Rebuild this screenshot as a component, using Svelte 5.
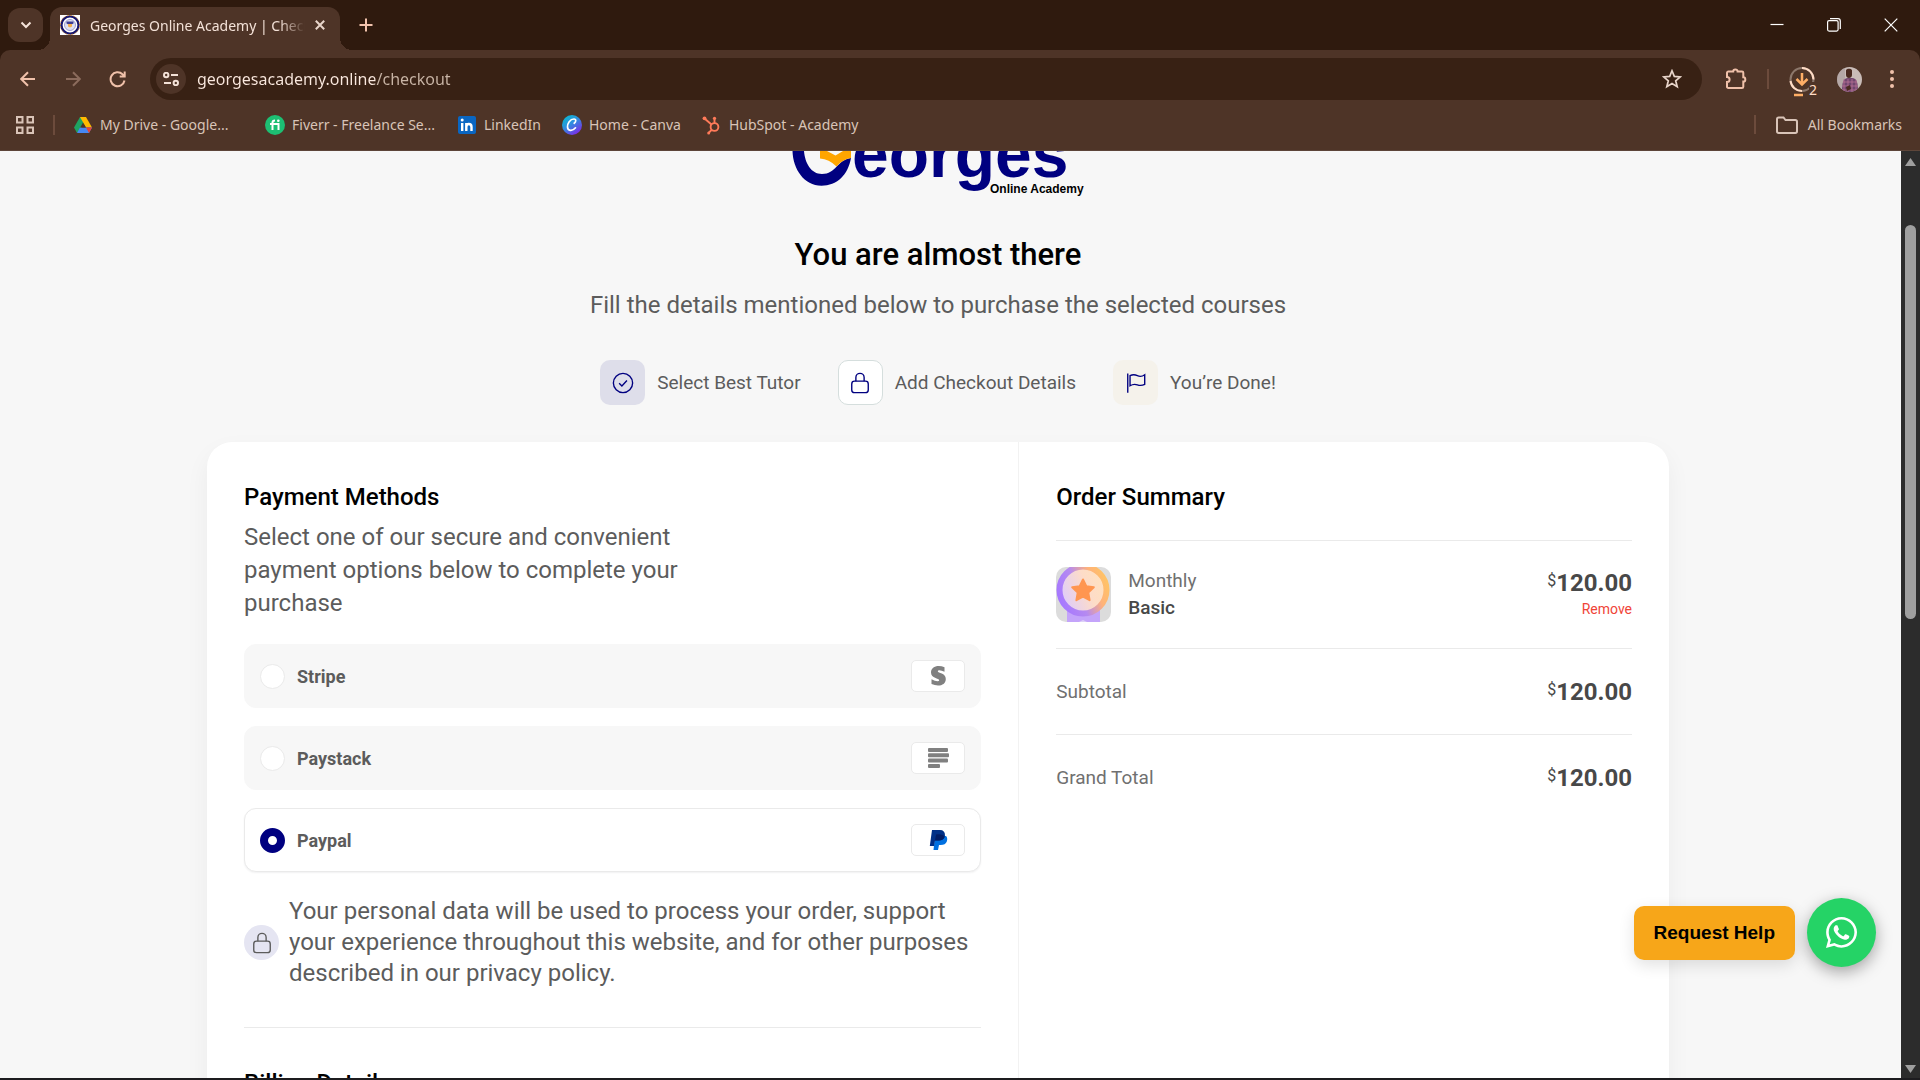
<script>
  const bookmarks = [
    { id: "drive", label: "My Drive - Google...", long: true },
    { id: "fiverr", label: "Fiverr - Freelance Se...", long: true },
    { id: "linkedin", label: "LinkedIn" },
    { id: "canva", label: "Home - Canva" },
    { id: "hubspot", label: "HubSpot - Academy" },
  ];

  const steps = [
    { id: "tutor", label: "Select Best Tutor" },
    { id: "checkout", label: "Add Checkout Details" },
    { id: "done", label: "You’re Done!" },
  ];

  const methods = [
    { id: "stripe", label: "Stripe" },
    { id: "paystack", label: "Paystack" },
    { id: "paypal", label: "Paypal" },
  ];

  const totals = [
    { label: "Subtotal", amount: "120.00" },
    { label: "Grand Total", amount: "120.00" },
  ];

  let selected = $state("paypal");
  let url = $state("georgesacademy.online/checkout");
</script>

{#snippet price(amount)}
  <span class="price"><sup>$</sup>{amount}</span>
{/snippet}

{#snippet lock()}
  <svg class="lock" viewBox="0 0 24 24">
    <rect x="3" y="10" width="18" height="12.5" rx="3" />
    <path d="M7.5 10V6a4.5 4.500 0 0 1 9 0v4" />
  </svg>
{/snippet}

<div class="window">
  <header class="chrome">
    <div class="tabstrip">
      <button class="tab-search" aria-label="Search tabs">
        <svg width="12" height="8" viewBox="0 0 12 8"><path d="M1.500 1.500 6 6l4.500-4.500" /></svg>
      </button>
      <div class="tab">
        <svg class="favicon" viewBox="0 0 20 20">
          <path fill="#fff" d="M0 0h20v20H0z" />
          <circle cx="10" cy="10" r="8.600" fill="#fff" stroke="#14146e" stroke-width="2.400" />
          <circle cx="10" cy="10" r="9.600" fill="none" stroke="#e0912a" stroke-width=".7" stroke-dasharray="2 1" />
          <circle cx="10" cy="10" r="5.500" fill="#dfe1f3" stroke="#8a8ac4" stroke-width=".8" />
          <path fill="#3c3c92" d="M6.500 6.500h7v2l-2 1h-3l-2-1z" />
          <path fill="#f2b04f" d="M8 9h4v2.500l-2 1-2-1z" />
        </svg>
        <span class="tab-title">Georges Online Academy | Checkout</span>
        <button class="plain" aria-label="Close tab">
          <svg width="10" height="10" viewBox="0 0 10 10"><path d="m.8.8 8.400 8.400M9.200.8.8 9.200" /></svg>
        </button>
      </div>
      <button class="plain new-tab" aria-label="New tab">
        <svg width="14" height="14" viewBox="0 0 14 14"><path d="M7 .5v13M.5 7h13" /></svg>
      </button>
      <div class="controls">
        <button class="plain" aria-label="Minimize">
          <svg width="14" height="14" viewBox="0 0 14 14"><path d="M.5 6.500h13" /></svg>
        </button>
        <button class="plain" aria-label="Restore">
          <svg width="14" height="14" viewBox="0 0 14 14">
            <rect x=".6" y="2.600" width="10.500" height="10.500" rx="1.500" />
            <path d="M3 .7h8a2.300 2.300 0 0 1 2.300 2.300v8" />
          </svg>
        </button>
        <button class="plain" aria-label="Close">
          <svg width="14" height="14" viewBox="0 0 14 14"><path d="m.7.7 12.600 12.600M13.300.7.7 13.300" /></svg>
        </button>
      </div>
    </div>

    <div class="toolbar">
      <button class="plain nav" aria-label="Back">
        <svg width="16" height="16" viewBox="0 0 16 16"><path d="M15 8H1.500M8 1.200 1.200 8 8 14.800" /></svg>
      </button>
      <button class="plain nav off" aria-label="Forward">
        <svg width="16" height="16" viewBox="0 0 16 16"><path d="M1 8h13.500M8 1.200 14.800 8 8 14.800" /></svg>
      </button>
      <button class="plain nav" aria-label="Reload">
        <svg width="18" height="18" viewBox="0 0 18 18">
          <path d="M15.500 10.500A7 7 0 1 1 13.500 4.200l2 1.800M15.700 1.500V6.500h-5" />
        </svg>
      </button>
      <div class="address">
        <button class="site-info" aria-label="View site information">
          <svg width="16" height="14" viewBox="0 0 16 14">
            <circle cx="3.200" cy="3" r="2.200" /><path d="M8 3h7" />
            <circle cx="12.800" cy="11" r="2.200" /><path d="M1 11h7" />
          </svg>
        </button>
        <input class="url" type="text" aria-label="Address bar" bind:value={url} />
        <button class="plain" aria-label="Bookmark this page">
          <svg width="20" height="20" viewBox="0 0 20 20">
            <path d="m10 1.800 2.300 5.600 6 .5-4.600 3.900 1.500 5.900L10 14.500l-5.200 3.200 1.500-5.900L1.700 7.900l6-.5z" />
          </svg>
        </button>
      </div>
      <div class="actions">
        <button class="plain" aria-label="Extensions">
          <svg width="22" height="22" viewBox="0 0 22 22">
            <path d="M3.300 3.500h4.900a2.200 2 0 0 1 4.400 0H17a1.300 1.300 0 0 1 1.300 1.300v4.400a2 2.200 0 0 1 0 4.400v5.100a1.300 1.300 0 0 1-1.300 1.300H3.300A1.300 1.300 0 0 1 2 18.700v-4.600a2.600 2.600 0 0 0 0-5.200V4.800a1.300 1.300 0 0 1 1.300-1.300z" />
          </svg>
        </button>
        <span class="rule"></span>
        <button class="plain downloads" aria-label="Downloads">
          <svg width="28" height="37" viewBox="0 -5 28 37">
            <circle cx="13" cy="13.500" r="11.500" stroke="#8d786c" />
            <path stroke="#ffdcc6" d="M13 2a11.500 11.500 0 0 1 11.500 11.500M1.500 15A11.500 11.500 0 0 0 13 25" />
            <path stroke="#ffae66" stroke-width="2.500" d="M13 7v11M7.500 13l5.500 5.500 5.500-5.500M5 29h9" />
          </svg>
          <span class="badge">2</span>
        </button>
        <button class="plain" aria-label="Profile">
          <svg class="avatar" width="25" height="25" viewBox="0 0 25 25">
            <path fill="#c9bcb8" d="M0 0h25v25H0z" />
            <path fill="#8f8386" d="M0 0h8v25H0z" opacity=".35" />
            <path fill="#71466f" d="M5 25c0-9 1-14 6-14h4c5 0 6 5 6 14z" />
            <path stroke="#b97196" stroke-width=".8" d="M7 12v13M11 12v13M15 12v13M19 13v12M6 15h14M5 19h16M5 23h16" />
            <path fill="#4a2a20" d="M9 3.500C9 1 15 1 15 3.500V8c0 4-6 4-6 0zM9 20l4-2 1 4-4 2z" />
          </svg>
        </button>
        <button class="plain menu" aria-label="Menu">
          <svg class="solid" width="6" height="20" viewBox="0 0 6 20">
            <circle cx="3" cy="3" r="2" /><circle cx="3" cy="10" r="2" /><circle cx="3" cy="17" r="2" />
          </svg>
        </button>
      </div>
    </div>

    <nav class="bookmarks">
      <button class="plain apps" aria-label="Apps">
        <svg width="18" height="18" viewBox="0 0 18 18">
          <path d="M1 1h5.500v5.500H1zM11.500 1H17v5.500h-5.500zM1 11.500h5.500V17H1zM11.500 11.500H17V17h-5.500z" />
        </svg>
      </button>
      <span class="rule"></span>
      {#each bookmarks as mark}
        <a class="bookmark" class:long={mark.long} href="#{mark.id}">
          <svg viewBox="0 0 20 20">
            {#if mark.id === "drive"}
              <path fill="#1ea362" d="M7 2h3l3.200 5.500L4 18 1 12.500z" />
              <path fill="#ffba00" d="M7 2h6l6 10.500h-6z" />
              <path fill="#4688f4" d="M4 18l3-5.500h12L16 18z" />
              <path fill="#ea4335" d="M13 12.500h6L16 18z" />
              <path fill="#4e3427" d="m10 7.500 2.800 5H7.200z" />
            {:else if mark.id === "fiverr"}
              <circle cx="10" cy="10" r="10" fill="#1dbf73" />
              <path fill="none" stroke="#fff" stroke-width="2" d="M7.500 15V7.500Q7.500 5.500 10 5.500M5 9h8.500v6" />
              <circle cx="13.300" cy="5.800" r="1.300" fill="#fff" />
            {:else if mark.id === "linkedin"}
              <rect x="1" y="1" width="18" height="18" rx="2" fill="#0a66c2" />
              <path fill="none" stroke="#fff" stroke-width="2.400" d="M5.200 8v8M9.300 8v8M9.300 12q0-3 2.500-3 2.700 0 2.700 3v4" />
              <circle cx="5.200" cy="5" r="1.500" fill="#fff" />
            {:else if mark.id === "canva"}
              <linearGradient id="canva" x1="0" y1="0" x2=".7" y2="1">
                <stop offset="0" stop-color="#00c4cc" /><stop offset=".5" stop-color="#2f8fe0" /><stop offset="1" stop-color="#7d2ae8" />
              </linearGradient>
              <circle cx="10" cy="10" r="10" fill="url(#canva)" />
              <path fill="none" stroke="#fff" stroke-width="1.700" stroke-linecap="round" d="M12.200 8.300c1.800-1.300 2.300-4.300-.2-4.300C8 4 5.300 8.500 5.500 12c.2 3.800 4.500 5 8 .8" />
            {:else}
              <g fill="none" stroke="#ff7a59" stroke-width="1.900">
                <circle cx="12.500" cy="12" r="3.900" /><path d="M12.500 8V4M9.500 9.500 2.500 3.500M9.800 14.800 7 17.500" />
              </g>
              <g fill="#ff7a59"><circle cx="12.500" cy="3.300" r="1.600" /><circle cx="2.500" cy="3.300" r="1.900" /><circle cx="6.700" cy="18" r="1.500" /></g>
            {/if}
          </svg>
          {mark.label}
        </a>
      {/each}
      <a class="bookmark all" href="#all">
        <svg class="folder" width="22" height="18" viewBox="0 0 22 18">
          <path d="M1 3.200Q1 1.500 2.700 1.500H7.500L9.500 4h9.800Q21 4 21 5.700v9.600q0 1.700-1.700 1.700H2.700Q1 17 1 15.300z" />
        </svg>
        All Bookmarks
      </a>
    </nav>
  </header>

  <div class="viewport">
    <main class="page">
      <svg class="logo" width="292" height="48" viewBox="0 0 292 48">
        <path fill="#000080" d="M.5 0C1 18 12 34.700 29.500 34.700 45 34.700 56 24 59 7 45 9 44 23 30 23 19 23 13 12 12 0z" />
        <path fill="#ffa500" d="M28 0h7l8.500 4.500L51 0h8v7q-9 1.500-14.500 8.500Q37 8 28 7.500z" />
        <text class="logo-name" x="60" y="26">eorges</text>
        <text class="logo-sub" x="198" y="42">Online Academy</text>
      </svg>
      <h1>You are almost there</h1>
      <p class="lead">Fill the details mentioned below to purchase the selected courses</p>

      <ol class="steps">
        {#each steps as step}
          <li>
            <span class="step-icon {step.id}">
              {#if step.id === "checkout"}
                {@render lock()}
              {:else if step.id === "tutor"}
                <svg viewBox="0 0 24 24"><circle cx="12" cy="12" r="10.500" /><path d="m7.800 12.300 3 3 5.500-6" /></svg>
              {:else}
                <svg viewBox="0 0 24 24">
                  <path d="M3 1.500v21M5.500 4q4-2 8 0t8-1v10.500q-4 2-8 .5t-8 1z" />
                </svg>
              {/if}
            </span>
            {step.label}
          </li>
        {/each}
      </ol>

      <div class="card">
        <section class="payment">
          <h2>Payment Methods</h2>
          <p class="intro">Select one of our secure and convenient payment options below to complete your purchase</p>

          <div class="methods">
            {#each methods as method}
              <label class="method" class:active={selected === method.id}>
                <input type="radio" name="method" value={method.id} bind:group={selected} />
                <span>{method.label}</span>
                <span class="brand">
                  <svg width="22" height="22" viewBox="0 0 22 22">
                    {#if method.id === "stripe"}
                      <path fill="#808080" d="M17.500 2.200v4.600q-3-1.500-5.200-1.500-1.500 0-1.500.9c0 2 8 1.600 8 7.700 0 4.200-3.300 6.600-7.800 6.600q-3.200 0-6.500-1.400v-4.800q3.500 1.900 6 1.900 1.700 0 1.700-1C12.200 13 4 13.700 4 7.500 4 3.500 7.200 1 11.800 1q2.900 0 5.700 1.200z" />
                    {:else if method.id === "paystack"}
                      <g fill="#808080">
                        <rect x="1" y="1" width="20" height="4" rx="1" />
                        <rect x="1" y="6.300" width="21" height="4" rx="1" />
                        <rect x="1" y="11.600" width="20" height="4" rx="1" />
                        <rect x="1" y="17" width="12" height="4" rx="1" />
                      </g>
                    {:else}
                      <path fill="#0070e0" d="M8 7h11q2 2 .8 5.500Q18.500 16 13.500 16H12l-1 5H6.500z" />
                      <path fill="#003087" d="M5 1h8q5 0 5 5.500-1 5-6.500 5H8L7 17H2.800z" />
                      <path fill="#001c64" d="M9 5.500q7-.8 8.700 2.500-1.500 3.500-6 3.500H8z" />
                    {/if}
                  </svg>
                </span>
              </label>
            {/each}
          </div>

          <div class="privacy">
            <span class="privacy-icon">{@render lock()}</span>
            <p>Your personal data will be used to process your order, support your experience throughout this website, and for other purposes described in our privacy policy.</p>
          </div>

          <h2 class="billing">Billing Details</h2>
        </section>

        <section class="summary">
          <h2>Order Summary</h2>
          <div class="item">
            <svg class="thumb" viewBox="0 0 55 55">
              <defs>
                <linearGradient id="ring" x1="0" y1=".7" x2="1" y2=".3">
                  <stop offset="0" stop-color="#a678ff" /><stop offset=".4" stop-color="#b58af0" /><stop offset=".75" stop-color="#ffb27a" /><stop offset="1" stop-color="#ffc266" />
                </linearGradient>
                <linearGradient id="disc" x1="0" y1=".7" x2="1" y2=".3">
                  <stop offset="0" stop-color="#dccbff" /><stop offset=".6" stop-color="#fddcc8" /><stop offset="1" stop-color="#ffe2bd" />
                </linearGradient>
              </defs>
              <path fill="#dcdcdc" d="M0 0h55v55H0z" />
              <path fill="#c4a4fa" d="M11 40h33v15H11z" />
              <circle cx="27" cy="23" r="23.500" fill="url(#disc)" stroke="url(#ring)" stroke-width="6" />
              <path fill="#ff9650" stroke="#ff9650" stroke-width="2" stroke-linejoin="round" d="m27 12.500 3.300 6.800 7.500 1-5.500 5.300 1.300 7.600-6.600-3.600-6.600 3.600 1.300-7.600-5.500-5.300 7.500-1z" />
              <path fill="#ddd0f8" d="m27 53 4 2h-8z" />
            </svg>
            <div class="item-name">
              <span>Monthly</span>
              <strong>Basic</strong>
            </div>
            <div class="item-price">
              {@render price("120.00")}
              <a href="#remove">Remove</a>
            </div>
          </div>
          {#each totals as total}
            <div class="total">
              <span>{total.label}</span>
              {@render price(total.amount)}
            </div>
          {/each}
        </section>
      </div>
    </main>

    <div class="scrollbar">
      <svg width="13" height="10" viewBox="0 0 13 10"><path d="M6.500 1 12 9H1z" /></svg>
      <span class="scroll-thumb"></span>
      <svg width="13" height="10" viewBox="0 0 13 10"><path d="M6.500 9 12 1H1z" /></svg>
    </div>

    <div class="help">
      <button class="request">Request Help</button>
      <a class="whatsapp" href="#whatsapp" aria-label="WhatsApp">
        <svg width="31" height="31" viewBox="0 0 448 448">
          <path d="M380.900 65.100C339 23.100 283.200 0 223.900 0 101.500 0 1.900 99.600 1.900 222c0 39.100 10.200 77.300 29.600 111L0 448l117.700-30.900c32.400 17.700 68.900 27 106.100 27h.1c122.300 0 224.100-99.600 224.100-222 0-59.300-25.200-115-67.100-157zM223.900 406.700c-33.200 0-65.700-8.900-94-25.700l-6.700-4-69.800 18.300L72 327.200l-4.400-7c-18.500-29.400-28.200-63.300-28.200-98.200 0-101.700 82.800-184.500 184.600-184.500 49.300 0 95.600 19.200 130.400 54.100s56.200 81.200 56.100 130.500c0 101.800-84.900 184.600-186.600 184.600zM325.100 268.500c-5.500-2.800-32.800-16.200-37.900-18-5.100-1.900-8.800-2.800-12.500 2.800s-14.300 18-17.600 21.800c-3.200 3.700-6.500 4.200-12 1.400-32.600-16.300-54-29.100-75.500-66-5.700-9.800 5.700-9.100 16.300-30.300 1.800-3.700.9-6.900-.5-9.700s-12.500-30.100-17.100-41.200c-4.500-10.800-9.100-9.300-12.500-9.500-3.200-.2-6.900-.2-10.600-.2s-9.700 1.400-14.800 6.900c-5.100 5.600-19.400 19-19.400 46.300s19.900 53.700 22.600 57.400c2.800 3.700 39.100 59.700 94.800 83.800 35.200 15.200 49 16.500 66.600 13.900 10.700-1.600 32.800-13.400 37.400-26.400s4.600-24.100 3.200-26.400c-1.300-2.500-5-3.900-10.500-6.600z" />
        </svg>
      </a>
    </div>
  </div>
</div>

<style>
  :global(body) {
    margin: 0;
  }

  .window {
    height: 100vh;
    display: flex;
    flex-direction: column;
    overflow: hidden;
    box-sizing: border-box;
    border-bottom: 2px solid #1d1c1f;
    background: #2f1a0e;
    font-family: Roboto, sans-serif;
    color: #5c5c5c;
  }

  h1,
  h2,
  p,
  ol {
    margin: 0;
    padding: 0;
  }

  button {
    font: inherit;
    border: 0;
    padding: 0;
    cursor: pointer;
  }

  /* browser frame */
  .chrome {
    flex: none;
    font-family: "Noto Sans", sans-serif;
    font-size: 14px;
    color: #e8d5ca;
  }

  .chrome svg {
    display: block;
    fill: none;
    stroke: currentColor;
    stroke-width: 2;
  }

  .plain {
    display: grid;
    place-items: center;
    background: none;
    color: inherit;
  }

  .tabstrip {
    display: flex;
    height: 50px;
    padding: 0 1px 0 8px;
    align-items: center;
  }

  .tab-search {
    display: grid;
    place-items: center;
    width: 35px;
    height: 34px;
    border-radius: 12px;
    background: #4e3427;
    color: #f5e3d9;
  }

  .tab {
    position: relative;
    display: flex;
    align-items: center;
    gap: 10px;
    align-self: flex-end;
    box-sizing: border-box;
    width: 290px;
    height: 43px;
    margin-left: 7px;
    padding: 0 15px 7px 10px;
    border-radius: 12px 12px 0 0;
    background: #4e3427;
  }

  .tab::before,
  .tab::after {
    content: "";
    position: absolute;
    bottom: 0;
    width: 12px;
    height: 12px;
  }

  .tab::before {
    right: 100%;
    background: radial-gradient(circle at 0 0, transparent 12px, #4e3427 12px);
  }

  .tab::after {
    left: 100%;
    background: radial-gradient(circle at 100% 0, transparent 12px, #4e3427 12px);
  }

  .tab .favicon {
    flex: none;
    width: 20px;
    height: 20px;
    stroke: none;
  }

  .tab-title {
    flex: 1;
    overflow: hidden;
    white-space: nowrap;
    color: #f3e1d7;
    mask-image: linear-gradient(to right, #000 88%, transparent);
  }

  .new-tab {
    margin-left: 19px;
    color: #f2c3ad;
  }

  .controls {
    display: flex;
    margin-left: auto;
    color: #fff;
  }

  .controls button {
    width: 57px;
  }

  .controls svg {
    stroke-width: 1.200;
  }

  .toolbar {
    display: flex;
    align-items: center;
    height: 58px;
    padding: 0 25px 0 5px;
    border-radius: 10px 10px 0 0;
    background: #4e3427;
  }

  .nav {
    width: 45px;
    height: 40px;
    color: #f0c1aa;
  }

  .nav.off {
    color: #8b6b5c;
  }

  .address {
    flex: 1;
    display: flex;
    align-items: center;
    gap: 11px;
    height: 42px;
    margin-left: 10px;
    padding: 0 20px 0 6px;
    box-sizing: border-box;
    border-radius: 21px;
    background: #382114;
  }

  .address .plain svg {
    stroke-width: 1.700;
  }

  .site-info {
    display: grid;
    place-items: center;
    width: 30px;
    height: 30px;
    border-radius: 50%;
    background: #4e3427;
    color: #f3e1d7;
  }

  /* host name bright, path dimmed */
  .url {
    flex: 1;
    min-width: 0;
    height: 24px;
    padding: 0;
    border: 0;
    outline: 0;
    font-family: inherit;
    font-size: 16px;
    line-height: 24px;
    color: transparent;
    background: linear-gradient(to right, #fbe9df 178px, #c9b5a6 178px);
    background-clip: text;
  }

  .actions {
    display: flex;
    align-items: center;
    gap: 20px;
    padding-left: 23px;
    color: #f0c1aa;
  }

  .menu {
    margin-left: 7px;
  }

  .rule {
    width: 2px;
    height: 20px;
    background: #6c4b3c;
  }

  .downloads {
    position: relative;
  }

  .badge {
    position: absolute;
    right: 0;
    bottom: 0;
    line-height: 16px;
    color: #ffdcc6;
    background: #4e3427;
  }

  .chrome svg.avatar {
    stroke: none;
    border-radius: 50%;
  }

  .chrome svg.solid {
    fill: currentColor;
    stroke: none;
  }

  .bookmarks {
    display: flex;
    align-items: center;
    height: 43px;
    padding: 0 18px 9px 16px;
    box-sizing: border-box;
    background: #4e3427;
    border-bottom: 1px solid #5d4539;
    color: #d9c4b8;
  }

  .apps {
    margin-right: 19px;
  }

  .bookmarks .rule {
    margin-right: 18px;
  }

  .bookmark {
    display: flex;
    align-items: center;
    gap: 7px;
    margin-right: 21px;
    color: inherit;
    text-decoration: none;
    white-space: nowrap;
  }

  .bookmark.long {
    width: 171px;
  }

  .bookmark svg {
    width: 20px;
    height: 20px;
    stroke: none;
  }

  .bookmark.all {
    gap: 10px;
    margin: 0 0 0 auto;
    padding-left: 20px;
    border-left: 2px solid #6c4b3c;
  }

  .bookmark .folder {
    width: 22px;
    height: 18px;
    stroke: currentColor;
  }

  /* page */
  .viewport {
    position: relative;
    flex: 1;
    min-height: 0;
    display: flex;
    overflow: hidden;
    background: #f7f7f7;
  }

  .page {
    flex: 1;
    display: flex;
    flex-direction: column;
    align-items: center;
    padding-right: 25px;
  }

  .logo {
    display: block;
    flex: none;
  }

  .logo-name,
  .logo-sub {
    font-family: "Liberation Sans", sans-serif;
    font-weight: 700;
  }

  .logo-name {
    font-size: 66px;
    fill: #000080;
  }

  .logo-sub {
    font-size: 12px;
    fill: #000;
  }

  h1 {
    margin-top: 38px;
    font-size: 31px;
    line-height: 36px;
    font-weight: 500;
    color: #000;
  }

  .lead {
    margin-top: 16px;
    font-size: 24px;
    line-height: 32px;
  }

  .steps {
    display: flex;
    gap: 37px;
    margin: 39px 0 37px;
    list-style: none;
    font-size: 19px;
  }

  .steps li {
    display: flex;
    align-items: center;
    gap: 12px;
  }

  .step-icon {
    display: grid;
    place-items: center;
    width: 45px;
    height: 45px;
    box-sizing: border-box;
    border-radius: 10px;
    background: #dedeea;
    color: #000080;
  }

  .step-icon.checkout {
    border: 1px solid #d5dedd;
    background: #fff;
  }

  .step-icon.done {
    background: #f5f2eb;
  }

  .step-icon svg,
  .lock {
    width: 22px;
    height: 22px;
    fill: none;
    stroke: currentColor;
    stroke-width: 1.500;
  }

  .card {
    display: grid;
    grid-template-columns: 5fr 4fr;
    flex: none;
    width: 78%;
    max-width: 1462px;
    border-radius: 25px;
    background: #fff;
    box-shadow: 0 10px 24px rgba(16, 24, 40, 0.05);
  }

  .payment {
    padding: 39px 37px;
    border-right: 1px solid #f2f2f2;
  }

  .summary {
    padding: 39px 37px;
  }

  h2 {
    font-size: 24px;
    line-height: 32px;
    font-weight: 500;
    color: #000;
  }

  .intro {
    max-width: 450px;
    margin: 8px 0 24px;
    font-size: 24px;
    line-height: 33px;
  }

  .methods {
    display: grid;
    gap: 18px;
  }

  .method {
    display: flex;
    align-items: center;
    gap: 12px;
    height: 64px;
    box-sizing: border-box;
    padding: 0 15px;
    border: 1px solid #f7f7f7;
    border-radius: 12px;
    background: #f7f7f7;
    font-size: 18px;
    font-weight: 700;
  }

  .method.active {
    background: #fff;
    border-color: #eaeaea;
    box-shadow: 0 1px 2px rgba(16, 24, 40, 0.06);
  }

  .method input {
    appearance: none;
    width: 25px;
    height: 25px;
    margin: 0;
    border: 1px solid #eaeaea;
    border-radius: 50%;
    background: #fff;
  }

  .method input:checked {
    border: 8px solid #000080;
  }

  .brand {
    display: grid;
    place-items: center;
    box-sizing: border-box;
    width: 54px;
    height: 32px;
    margin-left: auto;
    border: 1px solid #eaeaea;
    border-radius: 5px;
    background: #fff;
  }

  .privacy {
    display: flex;
    align-items: center;
    gap: 10px;
    margin-top: 24px;
    padding-bottom: 38px;
    border-bottom: 1px solid #eaeaea;
    font-size: 24px;
    line-height: 31px;
  }

  .privacy-icon {
    flex: none;
    display: grid;
    place-items: center;
    width: 35px;
    height: 35px;
    border-radius: 50%;
    background: #e5e5f2;
  }

  .billing {
    margin-top: 39px;
  }

  .item,
  .total {
    display: flex;
    align-items: center;
    justify-content: space-between;
    border-top: 1px solid #eaeaea;
    font-size: 19px;
  }

  .item {
    height: 107px;
    margin-top: 27px;
  }

  .total {
    height: 85px;
  }

  .total > span:first-child,
  .item-name span {
    color: #707070;
  }

  .thumb {
    width: 55px;
    height: 55px;
    border-radius: 10px;
  }

  .item-name {
    display: grid;
    gap: 3px;
    margin: 0 auto 0 17px;
    line-height: 24px;
  }

  .item-name strong {
    font-weight: 500;
    color: #484848;
  }

  .item-price {
    display: grid;
    justify-items: end;
    line-height: 24px;
  }

  .item-price a {
    font-size: 14px;
    color: #f04438;
    text-decoration: none;
  }

  .price {
    display: flex;
    font-size: 24px;
    line-height: 28px;
    font-weight: 700;
    color: #484848;
  }

  .price sup {
    font-size: 16px;
    line-height: 24px;
    font-weight: 400;
    vertical-align: baseline;
  }

  .scrollbar {
    display: flex;
    flex-direction: column;
    align-items: center;
    flex: none;
    width: 19px;
    padding: 6px 0 4px;
    box-sizing: border-box;
    background: #2c2c2c;
    fill: #9f9f9f;
  }

  .scroll-thumb {
    width: 11px;
    height: 43%;
    margin: 58px 0 auto;
    border-radius: 6px;
    background: #9f9f9f;
  }

  .help {
    position: absolute;
    right: 44px;
    bottom: 111px;
    display: flex;
    align-items: center;
    gap: 12px;
  }

  .request {
    height: 54px;
    padding: 0 20px;
    border-radius: 10px;
    background: #f7a619;
    color: #000;
    font-family: "Liberation Sans", sans-serif;
    font-size: 19px;
    font-weight: 700;
    box-shadow: 0 5px 16px rgba(0, 0, 0, 0.12);
  }

  .whatsapp {
    display: grid;
    place-items: center;
    width: 69px;
    height: 69px;
    border-radius: 50%;
    background: #25d366;
    fill: #fff;
    box-shadow: 0 5px 16px rgba(0, 0, 0, 0.35);
  }
</style>
